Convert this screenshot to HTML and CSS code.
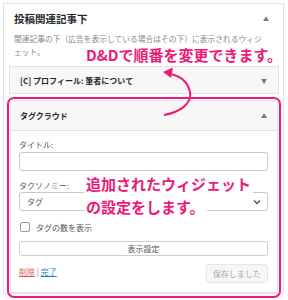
FILE: index.html
```html
<!DOCTYPE html>
<html lang="ja">
<head>
<meta charset="utf-8">
<link rel="stylesheet" href="styles.css">
</head>
<body>
<div class="panel">
  <div class="panel-head">
    <h3 class="panel-title">投稿関連記事下</h3>
    <span class="arrow-up">&#9650;</span>
  </div>
  <p class="desc">関連記事の下（広告を表示している場合はその下）に表示されるウィジェット。</p>
  <div class="widget collapsed">
    <span class="w-title">[C] プロフィール: 筆者について</span>
    <span class="arrow-down">&#9660;</span>
  </div>
  <div class="frame">
    <div class="widget open">
      <div class="w-head">
        <span class="w-title">タグクラウド</span>
        <span class="arrow-up">&#9650;</span>
      </div>
      <div class="w-body">
        <label class="lbl">タイトル:</label>
        <div class="input"></div>
        <label class="lbl lbl2">タクソノミー:</label>
        <div class="select"><span>タグ</span>
          <svg class="chev" width="8" height="6" viewBox="0 0 8 6"><path d="M1 1.5 L4 4.5 L7 1.5" fill="none" stroke="#555" stroke-width="1.4"/></svg>
        </div>
        <div class="check-row"><span class="cb"></span><span class="cb-label">タグの数を表示</span></div>
        <div class="btn-full">表示設定</div>
        <div class="actions">
          <div class="links"><a class="del">削除</a> <span class="sep">|</span> <a class="done">完了</a></div>
          <div class="btn-saved">保存しました</div>
        </div>
      </div>
    </div>
  </div>
  <div class="note note1">D&amp;Dで順番を変更できます。</div>
  <div class="note note2"><span>追加されたウィジェット</span><span>の設定をします。</span></div>
  <svg class="curve" width="40" height="54" viewBox="0 0 40 54">
    <path d="M6 49 C 22 46, 34 38, 32 26 C 30 16, 22 10, 12 8" fill="none" stroke="#ec1a78" stroke-width="2"/>
    <path d="M5 6 L15 1.5 L13 12 Z" fill="#ec1a78"/>
  </svg>
</div>
</body>
</html>
```
FILE: styles.css
```css
* { box-sizing: border-box; }
html, body { margin: 0; background: #fff; }
body {
  font-family: "Noto Sans CJK JP", "Noto Sans", sans-serif;
  color: #23282d;
  width: 288px;
  height: 300px;
  overflow: hidden;
}
.panel {
  position: relative;
  margin: 3px 0 0 3px;
  width: 281px;
  height: 291px;
  border: 1px solid #e2e2e2;
  padding: 0 4px 0 5px;
}
.panel-head {
  display: flex;
  justify-content: space-between;
  align-items: center;
  height: 28px;
  padding: 0 10px 0 5px;
}
.panel-title {
  margin: 0;
  font-size: 10.5px;
  font-weight: bold;
  color: #23282d;
}
.arrow-up, .arrow-down {
  font-size: 6px;
  color: #72777c;
}
.desc {
  margin: 0;
  padding: 0 13px 0 5px;
  font-size: 7.75px;
  line-height: 13px;
  color: #8a8a8a;
  height: 34px;
}
.widget {
  border: 1px solid #e2e2e2;
  background: #fff;
}
.collapsed {
  display: flex;
  justify-content: space-between;
  align-items: center;
  height: 28px;
  padding: 0 11px 0 10px;
  background: #f7f7f7;
}
.w-title {
  font-size: 8px;
  font-weight: bold;
  color: #23282d;
}
.frame {
  margin: 3px -2px 0 -2px;
  border: 2px solid #f0187e;
  border-radius: 7px;
  padding: 1px 1px 3px 1px;
}
.w-head {
  display: flex;
  justify-content: space-between;
  align-items: center;
  height: 30px;
  padding: 0 10px 0 9px;
  background: #f7f7f7;
  border-bottom: 1px solid #e2e2e2;
}
.w-body {
  padding: 8px 9px 9px 8px;
  display: flex;
  flex-direction: column;
}
.lbl {
  font-size: 8px;
  color: #555;
  line-height: 12px;
}
.lbl2 { margin-top: 9px; }
.input, .select {
  height: 19px;
  border: 1px solid #c8c8c8;
  border-radius: 3px;
  background: #fff;
}
.input { margin-top: 1px; }
.select {
  display: flex;
  align-items: center;
  justify-content: space-between;
  padding: 0 6px 0 7px;
  font-size: 8px;
  color: #555;
}
.check-row {
  display: flex;
  align-items: center;
  margin-top: 11px;
  height: 10px;
}
.cb {
  width: 10px;
  height: 10px;
  border: 1px solid #9a9a9a;
  border-radius: 2px;
  margin-left: 1px;
}
.cb-label {
  margin-left: 6px;
  font-size: 8px;
  color: #555;
}
.btn-full {
  margin-top: 9px;
  height: 15px;
  border: 1px solid #cfcfcf;
  border-radius: 3px;
  font-size: 8px;
  color: #555;
  text-align: center;
  line-height: 13px;
  background: #fff;
}
.actions {
  display: flex;
  justify-content: space-between;
  align-items: flex-start;
  margin-top: 8px;
}
.links {
  font-size: 8px;
  margin-top: 2px;
}
.del { color: #dc5a55; text-decoration: underline; }
.sep { color: #888; }
.done { color: #1e7fbf; text-decoration: underline; }
.btn-saved {
  width: 62px;
  height: 19px;
  border: 1px solid #e6e6e6;
  border-radius: 3px;
  background: #f7f7f7;
  color: #a8a8a8;
  font-size: 8px;
  text-align: center;
  line-height: 17px;
}
.note {
  position: absolute;
  color: #ec1a78;
  font-size: 15px;
  font-weight: bold;
  line-height: 19px;
  white-space: nowrap;
}
.note1 {
  left: 82px;
  top: 41px;
}
.note2 {
  left: 80px;
  top: 170px;
  display: flex;
  flex-direction: column;
  align-items: flex-start;
  gap: 4px;
}
.note2 span {
  background: #fff;
  padding: 0 2px;
}
.curve {
  position: absolute;
  left: 154px;
  top: 62px;
}
```
